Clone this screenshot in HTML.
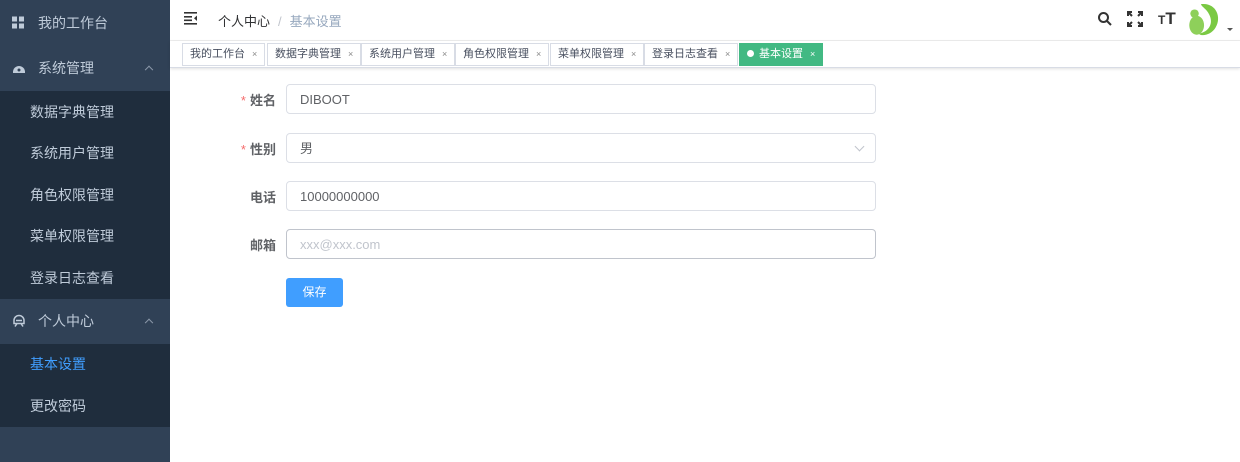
<!DOCTYPE html>
<html><head><meta charset="utf-8"><style>
*{box-sizing:border-box;margin:0;padding:0}
body{width:1240px;height:462px;overflow:hidden;font-family:"Liberation Sans","Noto Sans CJK SC",sans-serif;background:#fff;position:relative}
.side{position:absolute;left:0;top:0;width:170px;height:462px;background:#304156}
.mi{position:absolute;left:0;width:170px;color:#bfcbd9;font-size:14px;display:flex;align-items:center}
.top{padding-left:38px}
.sub{background:#1f2d3d;padding-left:30px;height:41.5px}
.ic{position:absolute;left:12px;top:50%;transform:translateY(-50%)}
.arr{position:absolute;right:18px;top:50%;width:6px;height:6px;border-left:1px solid #8a97a8;border-top:1px solid #8a97a8;transform:translateY(-20%) rotate(45deg)}
.hdr{position:absolute;left:170px;top:0;right:0;height:41px;border-bottom:1px solid #eee}
.tags{position:absolute;left:170px;top:41px;right:0;height:27px;border-bottom:1px solid #d8dce5;box-shadow:0 1px 3px rgba(0,0,0,.12)}
.tag{position:absolute;top:2px;height:23px;border:1px solid #d8dce5;background:#fff;color:#495060;font-size:11px;line-height:21px;padding:0 7px}
.tag i{font-style:normal;color:#888;font-size:9px;margin-left:7px}
.lbl{position:absolute;right:964px;font-size:13px;color:#606266;font-weight:bold}
.lbl b{color:#f56c6c;font-weight:normal;margin-right:4px}
.inp{position:absolute;left:286px;width:590px;height:30px;border:1px solid #dcdfe6;border-radius:4px;font-size:13px;color:#606266;padding-left:13px;line-height:29px}
</style></head><body>
<div class="side">
 <div class="mi top" style="top:0;height:45px"><svg class="ic" width="13" height="13" viewBox="0 0 13 13" fill="#bfcbd9"><rect x="0" y="0" width="5" height="5"/><rect x="7" y="0" width="5" height="5"/><rect x="0" y="7" width="5" height="5"/><rect x="7" y="7" width="5" height="5"/></svg>我的工作台</div>
 <div class="mi top" style="top:45px;height:45px"><svg class="ic" width="14" height="12" viewBox="0 0 14 12"><path d="M1 10A6 6 0 0 1 13 10L13 11H1Z" fill="#bfcbd9"/><circle cx="7" cy="8" r="1.5" fill="#304156"/></svg>系统管理<span class="arr"></span></div>
 <div class="mi sub" style="top:91px">数据字典管理</div>
 <div class="mi sub" style="top:132.5px">系统用户管理</div>
 <div class="mi sub" style="top:174px">角色权限管理</div>
 <div class="mi sub" style="top:215.5px">菜单权限管理</div>
 <div class="mi sub" style="top:257px">登录日志查看</div>
 <div class="mi top" style="top:298.5px;height:45px"><svg class="ic" width="14" height="13" viewBox="0 0 14 13" fill="none" stroke="#bfcbd9" stroke-width="1.5"><path d="M2 6A5 5 0 0 1 12 6V9H2Z"/><path d="M3 12L5 9M11 12L9 9M4 6H10"/></svg>个人中心<span class="arr"></span></div>
 <div class="mi sub" style="top:343.5px;color:#409eff">基本设置</div>
 <div class="mi sub" style="top:385px">更改密码</div>
</div>
<div class="hdr">
 <svg style="position:absolute;left:14px;top:12px" width="14" height="13" viewBox="0 0 14 13" fill="#333"><rect x="0" y="0" width="13" height="1.6"/><rect x="0" y="4" width="8" height="1.6"/><rect x="0" y="7.5" width="8" height="1.6"/><rect x="0" y="11" width="13" height="1.6"/><path d="M13 3.5L10 6.2L13 9Z"/></svg>
 <div style="position:absolute;left:48px;top:11px;font-size:13px;color:#303133">个人中心<span style="color:#c0c4cc;margin:0 8px">/</span><span style="color:#97a8be">基本设置</span></div>
 <svg style="position:absolute;left:927px;top:11px" width="16" height="16" viewBox="0 0 16 16" fill="none" stroke="#333" stroke-width="2"><circle cx="6.5" cy="6.5" r="4.5"/><path d="M10 10L14 14"/></svg>
 <svg style="position:absolute;left:957px;top:11px" width="16" height="16" viewBox="0 0 16 16" fill="none" stroke="#333" stroke-width="2"><path d="M1 5V1H5M11 1H15V5M15 11V15H11M5 15H1V11M2 2L5 5M14 2L11 5M14 14L11 11M2 14L5 11"/></svg>
 <div style="position:absolute;left:988px;top:9px;font-weight:bold;color:#333;line-height:20px"><span style="font-size:12px">T</span><span style="font-size:17px">T</span></div>
 <svg style="position:absolute;left:1014px;top:2px" width="38" height="36" viewBox="0 0 36 34"><path d="M16 2C30 0 36 14 30 24C26 31 17 33 14 30C24 28 28 20 24 12C21 6 17 5 16 2Z" fill="#7ac943"/><ellipse cx="12" cy="22" rx="7" ry="9" fill="#8ed05a"/><circle cx="10" cy="11" r="4" fill="#8ed05a"/></svg>
 <div style="position:absolute;left:1057px;top:28px;border:3px solid transparent;border-top:3px solid #555"></div>
</div>
<div class="tags">
 <div class="tag" style="left:12px">我的工作台<i>×</i></div>
 <div class="tag" style="left:97px">数据字典管理<i>×</i></div>
 <div class="tag" style="left:191px">系统用户管理<i>×</i></div>
 <div class="tag" style="left:285px">角色权限管理<i>×</i></div>
 <div class="tag" style="left:380px">菜单权限管理<i>×</i></div>
 <div class="tag" style="left:474px">登录日志查看<i>×</i></div>
 <div class="tag" style="left:569px;background:#42b983;border-color:#42b983;color:#fff"><span style="display:inline-block;width:7px;height:7px;border-radius:50%;background:#fff;margin-right:5px"></span>基本设置<i style="color:#fff">×</i></div>
</div>
<div class="lbl" style="top:90px"><b>*</b>姓名</div>
<div class="inp" style="top:84px">DIBOOT</div>
<div class="lbl" style="top:139px"><b>*</b>性别</div>
<div class="inp" style="top:133px">男<span style="position:absolute;right:12px;top:9px;width:7px;height:7px;border-right:1px solid #c0c4cc;border-bottom:1px solid #c0c4cc;transform:rotate(45deg)"></span></div>
<div class="lbl" style="top:187px">电话</div>
<div class="inp" style="top:181px">10000000000</div>
<div class="lbl" style="top:235px">邮箱</div>
<div class="inp" style="top:229px;color:#c0c4cc;border-color:#c0c4cc">xxx@xxx.com</div>
<div style="position:absolute;left:286px;top:278px;width:57px;height:29px;background:#409eff;border-radius:3px;color:#fff;font-size:12px;text-align:center;line-height:29px">保存</div>
</body></html>
